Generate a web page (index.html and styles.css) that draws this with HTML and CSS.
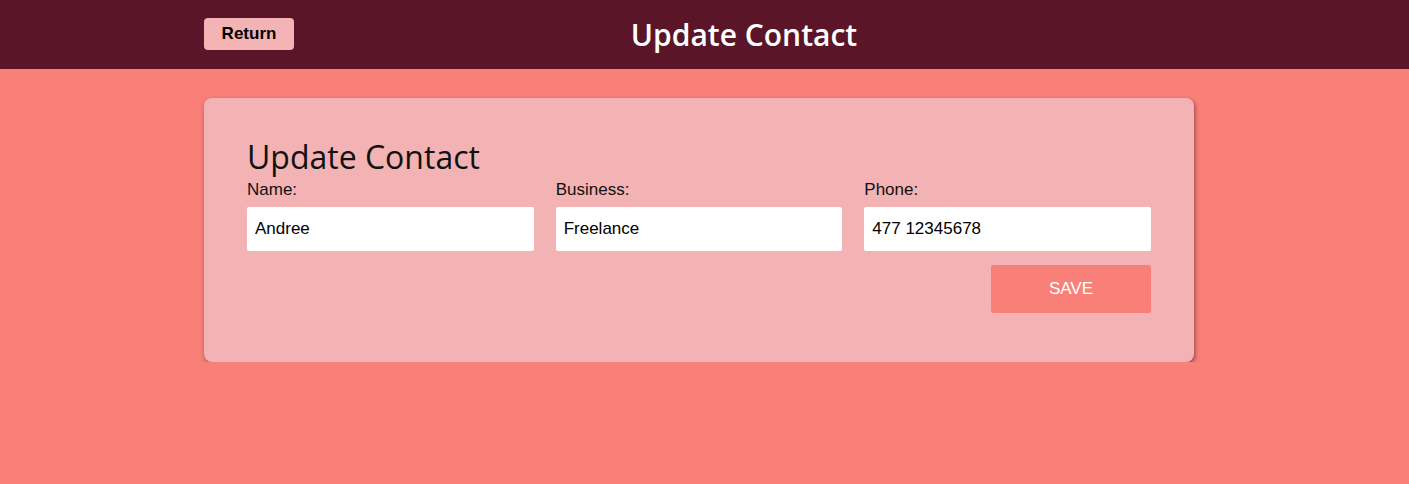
FILE: index.html
```html
<!DOCTYPE html>
<html>
<head>
<meta charset="utf-8">
<link rel="stylesheet" href="styles.css">
</head>
<body>
<header class="topbar">
  <div class="topbar-inner">
    <button class="return-btn">Return</button>
    <h1 class="page-title">Update Contact</h1>
  </div>
</header>
<main class="main">
  <section class="card">
    <h2 class="card-title">Update Contact</h2>
    <form class="form">
      <div class="fields">
        <label class="field">
          <span class="field-label">Name:</span>
          <input class="field-input" type="text" value="Andree">
        </label>
        <label class="field">
          <span class="field-label">Business:</span>
          <input class="field-input" type="text" value="Freelance">
        </label>
        <label class="field">
          <span class="field-label">Phone:</span>
          <input class="field-input" type="text" value="477 12345678">
        </label>
      </div>
      <div class="actions">
        <button type="button" class="save-btn">SAVE</button>
      </div>
    </form>
  </section>
</main>
</body>
</html>
```
FILE: styles.css
```css
* { box-sizing: border-box; }
html, body {
  margin: 0;
  padding: 0;
  background: #f88078;
  font-family: "Liberation Sans", Arial, sans-serif;
}
.topbar {
  background: #5a1628;
  height: 69px;
}
.topbar-inner {
  width: 990px;
  margin-left: calc(50% - 500.5px);
  height: 100%;
  display: flex;
  align-items: center;
}
.return-btn {
  width: 90px;
  height: 32px;
  margin-top: -1px;
  background: #f4b3b5;
  border: none;
  border-radius: 4px;
  font-family: "Liberation Sans", Arial, sans-serif;
  font-weight: bold;
  font-size: 17px;
  color: #000;
  padding: 0;
}
.page-title {
  flex: 1;
  margin: 0;
  text-align: center;
  color: #fff;
  font-family: "Open Sans", sans-serif;
  font-weight: 600;
  font-size: 30px;
  letter-spacing: 0;
}
.main {
  padding-top: 29px;
}
.card {
  width: 990px;
  margin-left: calc(50% - 500.5px);
  background: #f3b2b3;
  border-radius: 8px;
  box-shadow: 1px 2px 4px rgba(60, 10, 20, 0.5);
  padding: 40px 43px 49px 43px;
}
.card-title {
  margin: 0 0 4px 0;
  font-family: "Open Sans", sans-serif;
  font-weight: 400;
  font-size: 32px;
  line-height: 37px;
  color: #111;
}
.fields {
  display: grid;
  grid-template-columns: 1fr 1fr 1fr;
  column-gap: 22px;
}
.field {
  display: flex;
  flex-direction: column;
}
.field-label {
  font-size: 17px;
  line-height: 21px;
  margin-bottom: 7px;
  color: #111;
}
.field-input {
  height: 44px;
  border: none;
  border-radius: 2px;
  background: #fff;
  padding: 0 8px;
  font-family: "Liberation Sans", Arial, sans-serif;
  font-size: 17px;
  color: #000;
  outline: none;
}
.actions {
  display: flex;
  justify-content: flex-end;
  margin-top: 14px;
}
.save-btn {
  width: 160px;
  height: 48px;
  border: none;
  border-radius: 2px;
  background: #f88078;
  color: #fff;
  font-family: "Liberation Sans", Arial, sans-serif;
  font-size: 17px;
}
```
